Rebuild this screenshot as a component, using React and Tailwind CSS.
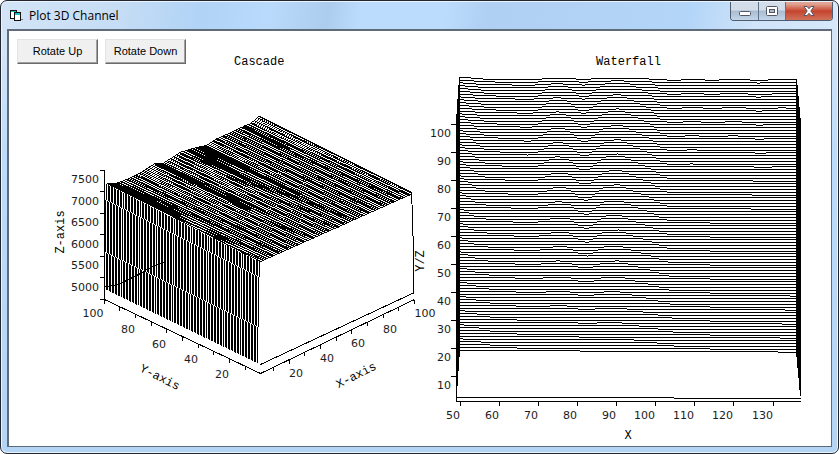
import React from "react";

const sample = (table, x) => {
  for (let k = 1; k < table.length; k++) {
    const [x1, y1] = table[k];
    if (x <= x1) {
      const [x0, y0] = table[k - 1];
      return y0 + ((y1 - y0) * (x - x0)) / (x1 - x0);
    }
  }
  return table[table.length - 1][1];
};

// One-pixel curve: horizontal runs at whole pixel rows, one run per level.
const pixelCurve = (from, to, heightAt) => {
  let d = "";
  let prev = null;
  for (let x = from; x <= to; x++) {
    const y = Math.round(heightAt(x));
    if (y !== prev) {
      d += prev === null ? `M${x} ${y + 0.5}` : `H${x}M${x} ${y + 0.5}`;
      prev = y;
    }
  }
  return `${d}H${to + 1}`;
};

/* ---------- Cascade ---------- */

// Depth of the profile below the flat surface, by distance along the X axis.
const PROFILE = [
  [0, 0], [7, 3], [14, 4], [29, 4], [42, 1.6], [46, 1], [55, 4.2], [72, 1],
  [77, 1.6], [89, 3.5], [97, 5.6], [109, 4], [132, 3.4], [142, 3.6], [151, 0],
];
const SLOPE = 0.447;
const SURFACE_ROWS = 74;
const WALL_BARS = 100;

const surfaceRows = Array.from({ length: SURFACE_ROWS }, (_, i) => {
  const t = i / (SURFACE_ROWS - 1);
  const x0 = 108 + 152 * t;
  const fade = Math.pow(1 - t, 1.1);
  // every row lies two pixels below the one behind it
  return pixelCurve(Math.round(x0), Math.round(x0 + 151), (x) => {
    const plane = 183 + 108 * SLOPE + 2 * i - x * SLOPE;
    return plane + sample(PROFILE, x - x0) * fade;
  });
});

// Mesh lines of constant X, running from the back edge to the front corner.
const meshLine = (dx, start, end) =>
  pixelCurve(Math.round(108 + dx + 152 * start), Math.round(108 + dx + 152 * end), (x) => {
    const t = (x - 108 - dx) / 152;
    return 183 - dx * SLOPE + 78 * t + sample(PROFILE, dx) * Math.pow(1 - Math.max(0, Math.min(t, 1)), 1.1);
  });

const range = (from, to, step) => {
  const out = [];
  for (let v = from; v <= to; v += step) out.push(v);
  return out;
};

const meshLines = [
  ...range(0, 151, 3.1).map((dx) => meshLine(dx, 0, 1)),
  ...range(0, 8, 1).map((dx) => meshLine(dx, 0, 0.42)),
  ...range(46, 53, 1).map((dx) => meshLine(dx, 0, 0.25)),
  ...range(47, 51, 1).map((dx) => meshLine(dx, 0.25, 0.6)),
  ...range(78, 82, 1).map((dx) => meshLine(dx, 0, 0.4)),
  ...range(89, 96, 1).map((dx) => meshLine(dx, 0, 0.3)),
  ...range(90, 94, 1).map((dx) => meshLine(dx, 0.3, 0.65)),
  ...range(133, 136, 1).map((dx) => meshLine(dx, 0, 0.3)),
];

const wallBars = Array.from({ length: WALL_BARS }, (_, i) => {
  const t = i / (WALL_BARS - 1);
  const x = Math.round(104 + 153 * t) + 0.5;
  const top = Math.round(184 + 78 * t);
  const upper = Math.round(200 + 77 * t);
  const lower = Math.round(252 + 75 * t);
  const bottom = Math.round(289 + 74 * t);
  return `M${x + 2} ${top}V${upper}M${x + 1} ${upper}V${lower}M${x} ${lower}V${bottom}`;
});

const zTicks = [170, 191, 213, 234, 256, 277, 299];
const zLabels = [[7500, 179], [7000, 201], [6500, 222], [6000, 244], [5500, 265], [5000, 287]];
const yTicks = [104, 119, 135, 151, 166, 182, 198, 213, 229, 245];
const xTicks = [273, 289, 304, 320, 336, 351, 367, 383, 398, 414];
const baseLabels = [
  [100, 93, 313], [80, 128, 329], [60, 159, 344], [40, 191, 359], [20, 222, 374],
  [20, 296, 373], [40, 327, 358], [60, 358, 343], [80, 390, 329], [100, 425, 313],
];

function Num({ x, y, anchor = "middle", children }) {
  return (
    <text x={x} y={y + 4} textAnchor={anchor} className="fill-[#1c1c1c] font-['DejaVu_Sans',sans-serif] text-[11px]">
      {children}
    </text>
  );
}

function AxisName({ x, y, angle = 0, children }) {
  return (
    <text
      x={x}
      y={y}
      dy={4}
      textAnchor="middle"
      transform={`rotate(${angle} ${x} ${y})`}
      className="fill-black font-['Liberation_Mono',monospace] text-[12px]"
    >
      {children}
    </text>
  );
}

function Cascade() {
  return (
    <svg viewBox="9 71 431 375" className="block w-full overflow-visible" role="img" aria-label="Cascade">
      <g fill="none" stroke="#000" strokeWidth="1" shapeRendering="crispEdges">
        {wallBars.map((d, i) => (
          <path key={i} d={d} />
        ))}
        {surfaceRows.map((d, i) => (
          <path key={i} d={d} />
        ))}
        {meshLines.map((d, i) => (
          <path key={i} d={d} />
        ))}
      </g>
      <g transform="translate(0.5 0.5)" fill="none" stroke="#000" strokeWidth="1" shapeRendering="crispEdges">
        <polyline points="107,183 180,220 260,261" />
        <polyline points="105,286 113,285 122,282 140,273 150,267 165,261" />
        <polyline points="259,116 411,192 412,215 413,255 413,292" />
        <line x1="260" y1="364" x2="414" y2="292" />
        <polyline points="104,170 104,299 260,373 414,299" />
        {zTicks.map((y) => (
          <line key={y} x1="99" y1={y} x2="104" y2={y} />
        ))}
        {yTicks.map((x) => {
          const y = 299 + ((x - 104) * 74) / 156;
          return <line key={x} x1={x} y1={y} x2={x} y2={y + 4} />;
        })}
        {xTicks.map((x) => {
          const y = 373 - ((x - 260) * 74) / 154;
          return <line key={x} x1={x} y1={y} x2={x} y2={y + 4} />;
        })}
      </g>
      {zLabels.map(([label, y]) => (
        <Num key={label} x={99} y={y} anchor="end">{label}</Num>
      ))}
      {baseLabels.map(([label, x, y]) => (
        <Num key={x} x={x} y={y}>{label}</Num>
      ))}
      <AxisName x={60} y={232} angle={-90}>Z-axis</AxisName>
      <AxisName x={160} y={377} angle={27}>Y-axis</AxisName>
      <AxisName x={356} y={375} angle={-27}>X-axis</AxisName>
      <AxisName x={420} y={261} angle={-90}>Y/Z</AxisName>
    </svg>
  );
}

/* ---------- Waterfall ---------- */

const FIRST_SLICE = [
  [460, 1.3], [481, 1.1], [490, 0.9], [517, 0.7], [580, 0.5], [620, 0.35],
  [656, 0.1], [674, -0.1], [709, -0.3], [778, -0.5], [796, -0.6],
];
const MIDDLE_SLICE = [
  [460, 1.4], [476, 0.8], [495, 0.6], [530, 0.4], [545, 0.6], [557, 0.9], [568, 0.8],
  [579, 0.2], [587, 0], [594, 0.4], [604, 0.9], [618, 1], [632, 0.6], [650, 0.2],
  [662, -0.2], [670, -0.4], [690, -0.4], [710, -0.5], [750, -0.5], [760, -0.65], [796, -0.6],
];
const LAST_SLICE = [
  [460, 2.3], [471, 1.5], [483, 0.5], [500, 0.2], [527, -0.05], [535, 0.1], [541, 0.5], [550, 1.1],
  [557, 1.3], [566, 1], [576, 0.5], [583, 0], [590, 0.5], [604, 1.1], [617, 1.5],
  [630, 1.1], [649, 0.5], [660, -0.3], [667, -0.5], [674, -0.6], [680, -0.5],
  [692, -0.3], [705, -0.5], [711, -0.6], [718, -0.5], [732, -0.3], [750, -0.5],
  [758, -0.75], [767, -0.5], [780, -0.4], [796, -0.45],
];
const WATER_ROWS = 98;

const waterfallRows = Array.from({ length: WATER_ROWS }, (_, i) => {
  const t = i / (WATER_ROWS - 1);
  const [near, far] = t < 0.5 ? [FIRST_SLICE, MIDDLE_SLICE] : [MIDDLE_SLICE, LAST_SLICE];
  const mix = t < 0.5 ? t * 2 : t * 2 - 1;
  const base = 351 - 272 * t;
  return pixelCurve(459, 796, (x) => base - sample(near, x) * (1 - mix) - sample(far, x) * mix);
});

const leftEdges = [[459, 77, 357], [458, 85, 371], [457, 99, 386], [456, 114, 401]];
const rightEdges = [[796, 79, 357], [797, 85, 368], [798, 96, 378], [799, 107, 390], [800, 118, 396]];
const waterY = [10, 20, 30, 40, 50, 60, 70, 80, 90, 100];
const waterX = [[50, 460], [60, 499], [70, 538], [80, 577], [90, 616], [100, 655], [110, 694], [120, 733], [130, 773]];

function Waterfall() {
  return (
    <svg viewBox="440 71 391 375" className="block w-full overflow-visible" role="img" aria-label="Waterfall">
      <g fill="none" stroke="#000" strokeWidth="1" shapeRendering="crispEdges">
        {waterfallRows.map((d, i) => (
          <path key={i} d={d} />
        ))}
        {[...leftEdges, ...rightEdges].map(([x, y1, y2]) => (
          <line key={x} x1={x + 0.5} y1={y1} x2={x + 0.5} y2={y2} />
        ))}
        <path d="M456 397.5H674M674 398.5H801M456 401.5H801" />
        {waterY.map((v) => (
          <line key={v} x1="451" y1={404.5 - 2.8 * v} x2="456" y2={404.5 - 2.8 * v} />
        ))}
        {waterX.map(([v, x]) => (
          <line key={v} x1={x + 0.5} y1="401" x2={x + 0.5} y2="406" />
        ))}
      </g>
      {waterY.map((v) => (
        <Num key={v} x={451} y={413 - 2.8 * v} anchor="end">{v}</Num>
      ))}
      {waterX.map(([v, x]) => (
        <Num key={v} x={x} y={415} anchor="end">{v}</Num>
      ))}
      <AxisName x={628} y={435}>X</AxisName>
    </svg>
  );
}

/* ---------- Window ---------- */

function FormIcon() {
  return (
    <svg width="14" height="14" viewBox="0 0 14 14" shapeRendering="crispEdges" aria-hidden="true">
      <path d="M1.500 1.500h6v8h-6z" fill="#fff" stroke="#111" />
      <path d="M2 2h5v1H2z" fill="#16c5c9" />
      <path d="M5.500 3.500h6v8h-6z" fill="#fff" stroke="#111" />
      <path d="M6 4h5v2H6z" fill="#16c5c9" />
      <path d="M12 10h2v1h-2z" fill="#777" />
    </svg>
  );
}

const glass = "flex items-center justify-center bg-linear-to-b from-[#d3dde9] from-45% via-[#a9bbd0] via-50% to-[#c3d5e8]";

function WindowButtons() {
  return (
    <div className="flex h-[19px] overflow-hidden rounded-b-[4px] border border-t-0 border-[#4e5c6e]">
      <button type="button" aria-label="Minimize" className={`${glass} w-[28px] border-r border-[#5f7087]`}>
        <svg width="12" height="6" viewBox="0 0 12 6" className="mt-[5px]"><rect x=".5" y=".5" width="11" height="4" rx="1" fill="#fff" stroke="#535666" /></svg>
      </button>
      <button type="button" aria-label="Maximize" className={`${glass} w-[27px] border-r border-[#5f7087]`}>
        <svg width="12" height="10" viewBox="0 0 12 10">
          <rect x=".5" y=".5" width="11" height="9" rx="1" fill="#fff" stroke="#535666" />
          <rect x="3.5" y="3.5" width="5" height="3" fill="#a9bbd0" stroke="#535666" />
        </svg>
      </button>
      <button type="button" aria-label="Close" className="flex w-[46px] items-center justify-center bg-linear-to-b from-[#e0a495] from-10% via-[#c5442d] via-50% to-[#d1705a]">
        <svg width="12" height="10" viewBox="0 0 12 10">
          <path d="M1 .5h3l2 2.2L8 .5h3L7.8 5 11 9.500H8L6 7.300 4 9.500H1L4.200 5z" fill="#fff" stroke="#535666" strokeLinejoin="round" />
        </svg>
      </button>
    </div>
  );
}

function RotateButton({ children }) {
  return (
    <button
      type="button"
      className="h-[25px] w-[81px] border border-t-[#e3e3e3] border-r-[#696969] border-b-[#696969] border-l-[#e3e3e3] bg-[#f0f0f0] font-['Liberation_Sans',sans-serif] text-[11px] text-black shadow-[inset_-1px_-1px_0_#a0a0a0]"
    >
      {children}
    </button>
  );
}

export default function App() {
  return (
    <div className="flex min-h-screen flex-col rounded-[7px] border border-[#23252f] bg-linear-to-b from-[#d3e4f6] from-10% via-[#bcdcfb] via-35% to-[#b4d4f5] p-px shadow-[inset_0_0_0_1px_#e9f4ff]">
      <header className="flex h-[27px] items-start justify-between rounded-t-[5px] bg-[linear-gradient(100deg,#d3e4f6_0%,#c6ddf5_14%,#b0d3f6_24%,#b9dafb_32%,#accdee_39%,#bbdcfc_43%,#bbdcfc_53%,#b0d0f3_58%,#b3d5f8_82%,#cfe3f9_90%,#d6e8fa_100%)] pr-[4px] pl-[7px]">
        <div className="flex h-full items-center gap-[6px]">
          <FormIcon />
          <h1 className="font-['Open_Sans',sans-serif] text-[12px] text-black">Plot 3D Channel</h1>
        </div>
        <WindowButtons />
      </header>
      <main className="mx-[5px] mb-[5px] grid grow grid-cols-[431fr_391fr] content-start border-t-2 border-r border-b border-l-2 border-[#5f6b78] bg-white">
        <figure>
          <div className="flex h-[40px] items-start pt-[8px] pl-[8px]">
            <div className="flex gap-[7px]">
              <RotateButton>Rotate Up</RotateButton>
              <RotateButton>Rotate Down</RotateButton>
            </div>
            <figcaption className="mt-[15px] ml-[48px] font-['Liberation_Mono',monospace] text-[12px] leading-[16px] text-black">Cascade</figcaption>
          </div>
          <Cascade />
        </figure>
        <figure>
          <figcaption className="h-[40px] pt-[23px] pr-[14px] text-center font-['Liberation_Mono',monospace] text-[12px] leading-[16px] text-black">Waterfall</figcaption>
          <Waterfall />
        </figure>
      </main>
    </div>
  );
}
